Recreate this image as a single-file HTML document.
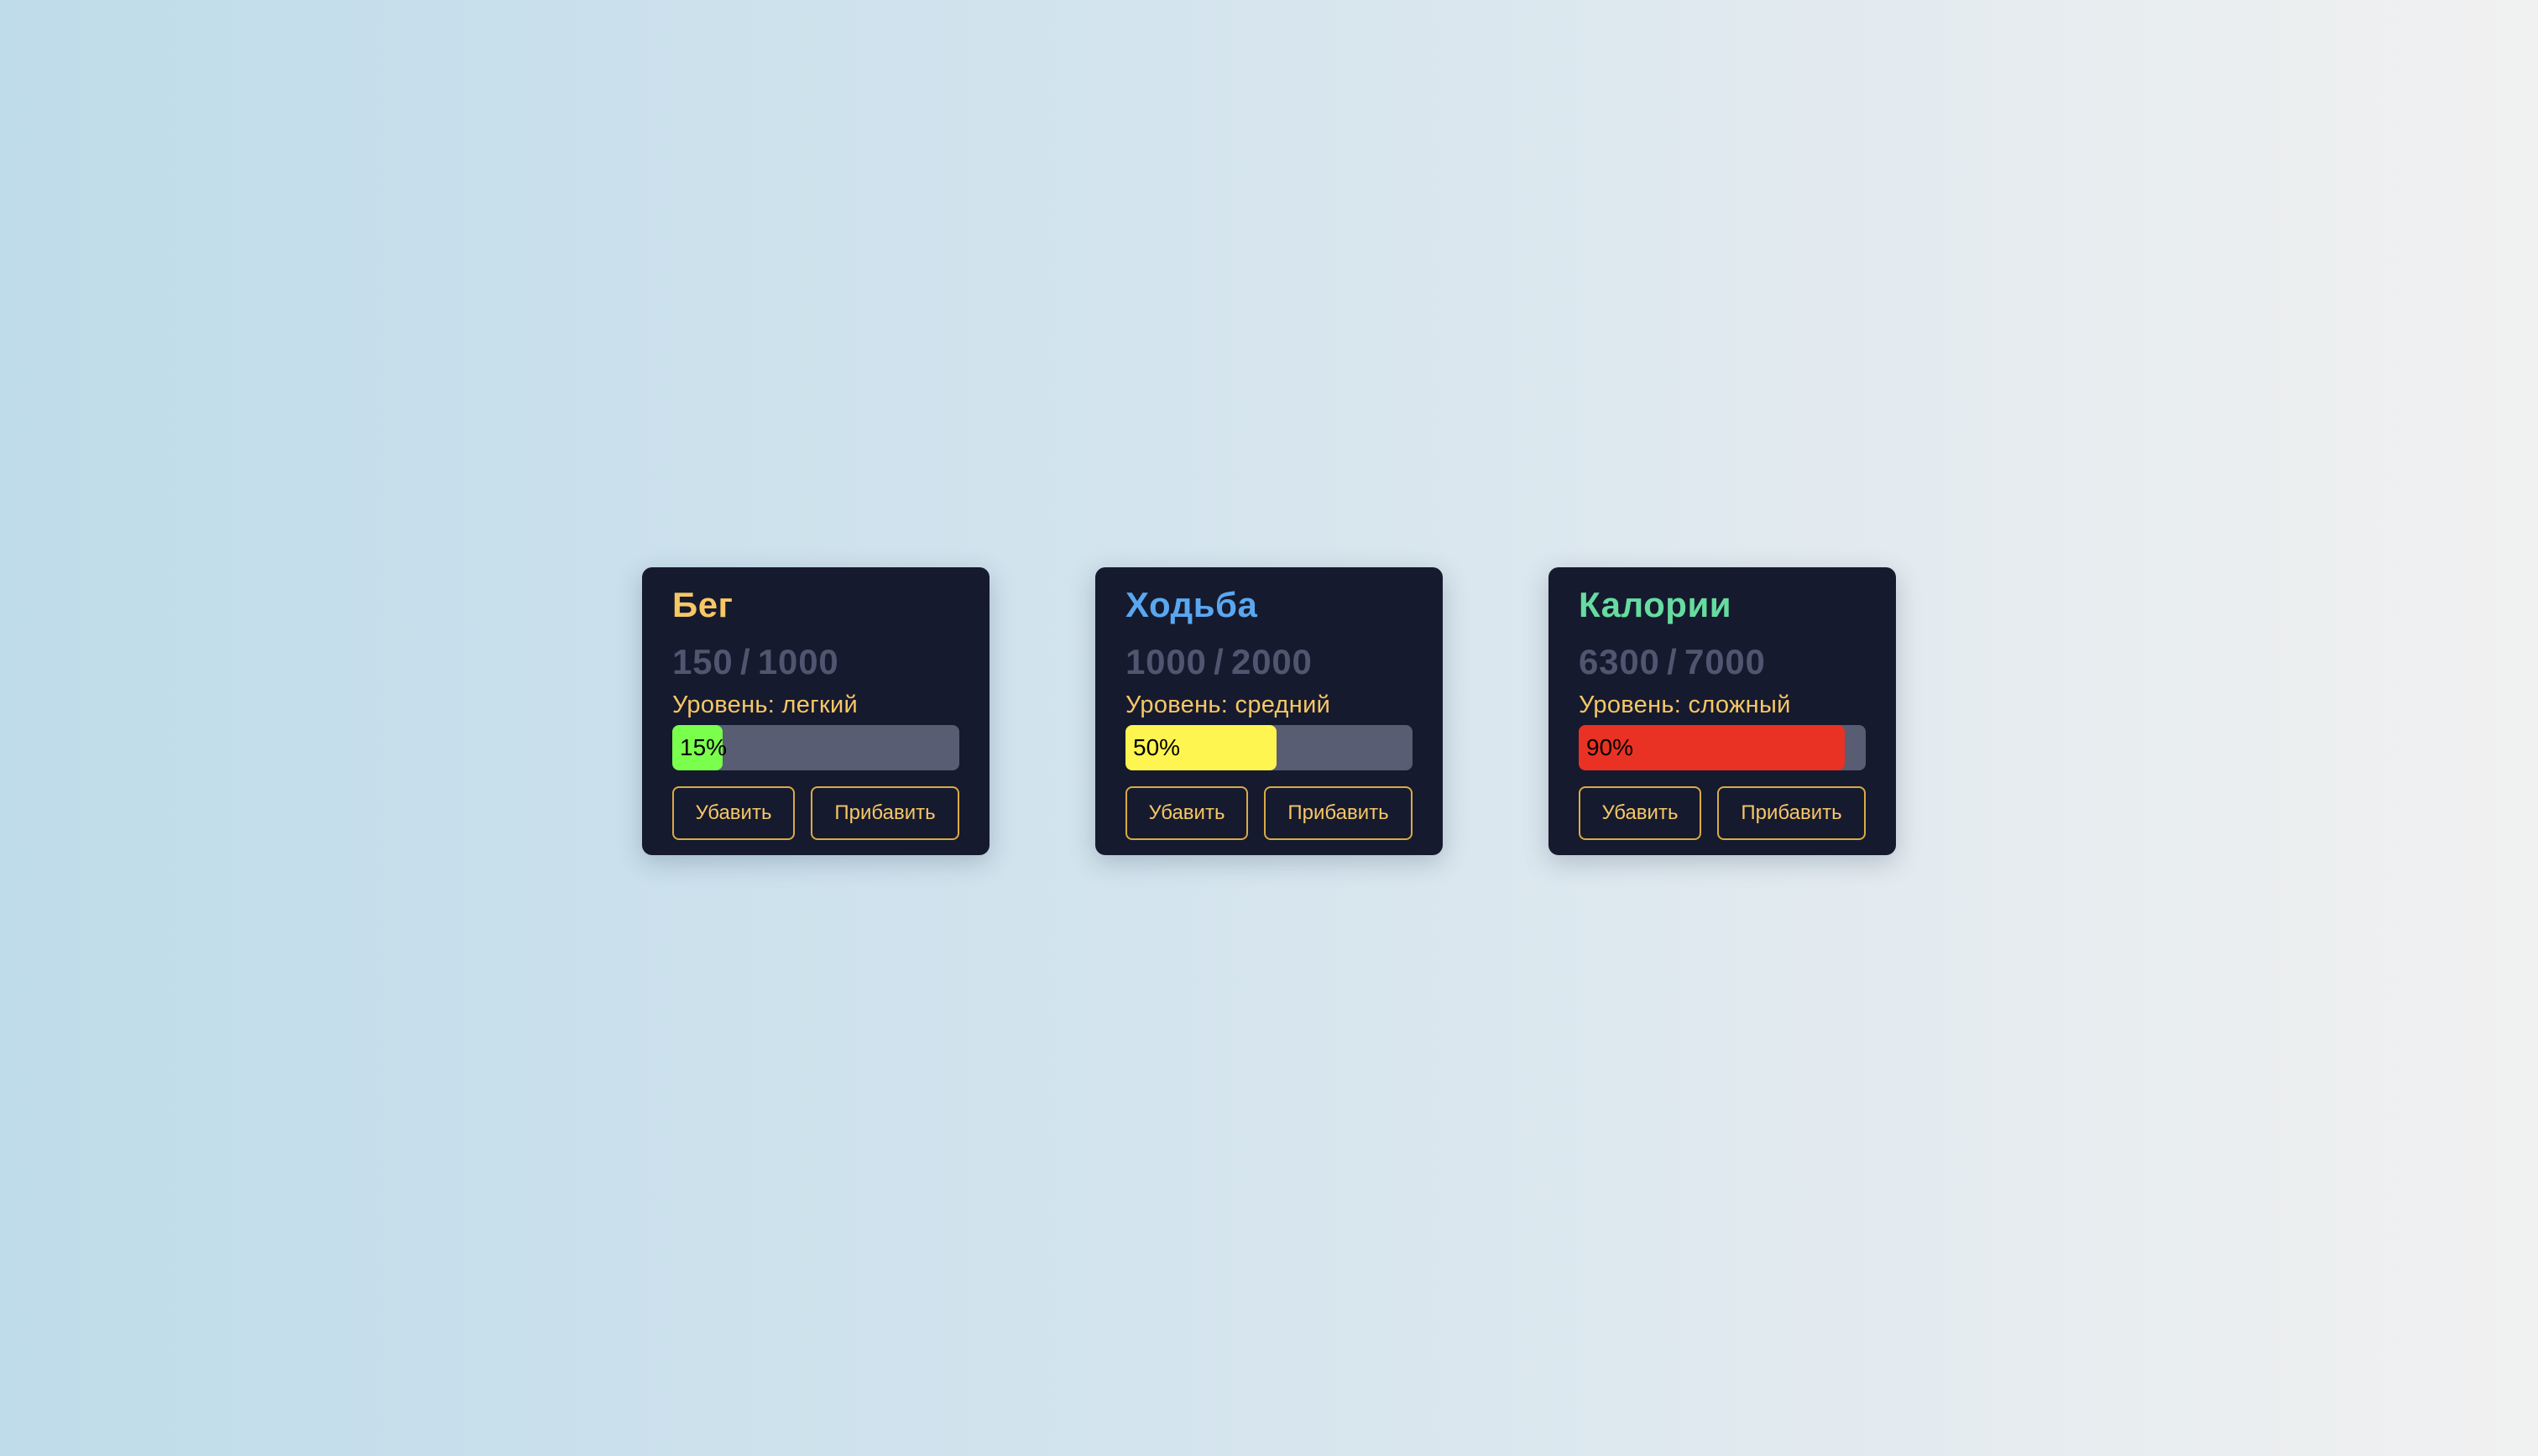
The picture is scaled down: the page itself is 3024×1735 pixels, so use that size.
<!DOCTYPE html>
<html><head><meta charset="utf-8"><style>
html,body{margin:0;padding:0}
body{width:3024px;height:1735px;background:linear-gradient(90deg,#bfdcea 0%,#d6e5ee 50%,#f1f1f1 100%);font-family:"Liberation Sans","DejaVu Sans",sans-serif;position:relative;overflow:hidden}
.card{position:absolute;top:676px;width:414px;height:343px;background:#161a2e;border-radius:12px;box-shadow:0 8px 30px rgba(40,60,90,.25);box-sizing:border-box;padding:0 36px}
h2{position:absolute;left:36px;top:21px;margin:0;font-size:42px;font-weight:bold;line-height:48px;letter-spacing:0.5px}
.n{position:absolute;left:36px;top:88px;font-size:42px;font-weight:bold;color:#50566f;line-height:50px;letter-spacing:0.8px;word-spacing:-4px}
.l{position:absolute;left:36px;top:147px;font-size:29px;color:#f6c765;line-height:34px;letter-spacing:0.3px}
.bar{position:absolute;left:36px;top:188px;width:342px;height:54px;background:#585d73;border-radius:8px;overflow:hidden}
.f{height:54px;border-radius:8px;font-size:28px;line-height:54px;color:#000;padding-left:9px;box-sizing:border-box;white-space:nowrap}
.b{position:absolute;top:261px;height:64px;border:2px solid #d9ab45;border-radius:8px;box-sizing:border-box;color:#f6c765;font-size:24px;line-height:60px;text-align:center}
.b1{left:36px;width:146px}.b2{left:201px;width:177px}
</style></head><body>
<div class="card" style="left:765px">
<h2 style="color:#f6c765">Бег</h2><div class="n">150 / 1000</div><div class="l">Уровень: легкий</div>
<div class="bar"><div class="f" style="width:60px;background:#7aff4d">15%</div></div>
<div class="b b1">Убавить</div><div class="b b2">Прибавить</div></div>
<div class="card" style="left:1305px">
<h2 style="color:#5aa7f0">Ходьба</h2><div class="n">1000 / 2000</div><div class="l">Уровень: средний</div>
<div class="bar"><div class="f" style="width:180px;background:#fff550">50%</div></div>
<div class="b b1">Убавить</div><div class="b b2">Прибавить</div></div>
<div class="card" style="left:1845px">
<h2 style="color:#66dca0">Калории</h2><div class="n">6300 / 7000</div><div class="l">Уровень: сложный</div>
<div class="bar"><div class="f" style="width:317px;background:#e93223">90%</div></div>
<div class="b b1">Убавить</div><div class="b b2">Прибавить</div></div>
</body></html>
